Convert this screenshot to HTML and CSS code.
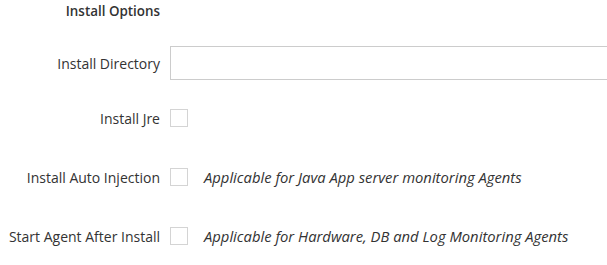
FILE: index.html
```html
<!DOCTYPE html>
<html lang="en">
<head>
  <meta charset="UTF-8">
  <title>Install Options</title>
  <link rel="stylesheet" href="styles.css">
</head>
<body>
  <form class="options">
    <div class="row heading">
      <span class="label title">Install Options</span>
    </div>

    <div class="row field">
      <label class="label" for="install-dir">Install Directory</label>
      <input type="text" id="install-dir" class="text-input">
    </div>

    <div class="row check">
      <label class="label" for="install-jre">Install Jre</label>
      <div class="control">
        <span class="box" id="install-jre"></span>
      </div>
    </div>

    <div class="row check">
      <label class="label" for="auto-inject">Install Auto Injection</label>
      <div class="control">
        <span class="box" id="auto-inject"></span>
        <em class="hint">Applicable for Java App server monitoring Agents</em>
      </div>
    </div>

    <div class="row check">
      <label class="label" for="start-agent">Start Agent After Install</label>
      <div class="control">
        <span class="box" id="start-agent"></span>
        <em class="hint">Applicable for Hardware, DB and Log Monitoring Agents</em>
      </div>
    </div>
  </form>
</body>
</html>
```

FILE: styles.css
```css
body {
  margin: 0;
  font-family: "Open Sans", Arial, sans-serif;
  font-size: 14px;
  color: #333;
  background: #fff;
  overflow: hidden;
}

.options {
  width: 100%;
}

.row {
  display: grid;
  grid-template-columns: 160px 1fr;
  column-gap: 10px;
  align-items: center;
  height: 34px;
  margin-bottom: 25px;
}

.heading {
  height: 22px;
  margin-bottom: 24px;
}

.field {
  margin-bottom: 21px;
}

.label {
  text-align: right;
  white-space: nowrap;
}

.title {
  font-weight: 600;
  font-size: 13.4px;
}

.text-input {
  height: 34px;
  box-sizing: border-box;
  border: 1px solid #ccc;
  border-right: none;
  padding: 6px 10px;
  font: inherit;
  width: 100%;
}

.control {
  display: flex;
  align-items: center;
  gap: 16px;
}

.box {
  width: 18px;
  height: 18px;
  box-sizing: border-box;
  border: 1px solid #d4d4d4;
  background: #fff;
}

.hint {
  font-style: italic;
  font-size: 14.8px;
  color: #333;
}
```
